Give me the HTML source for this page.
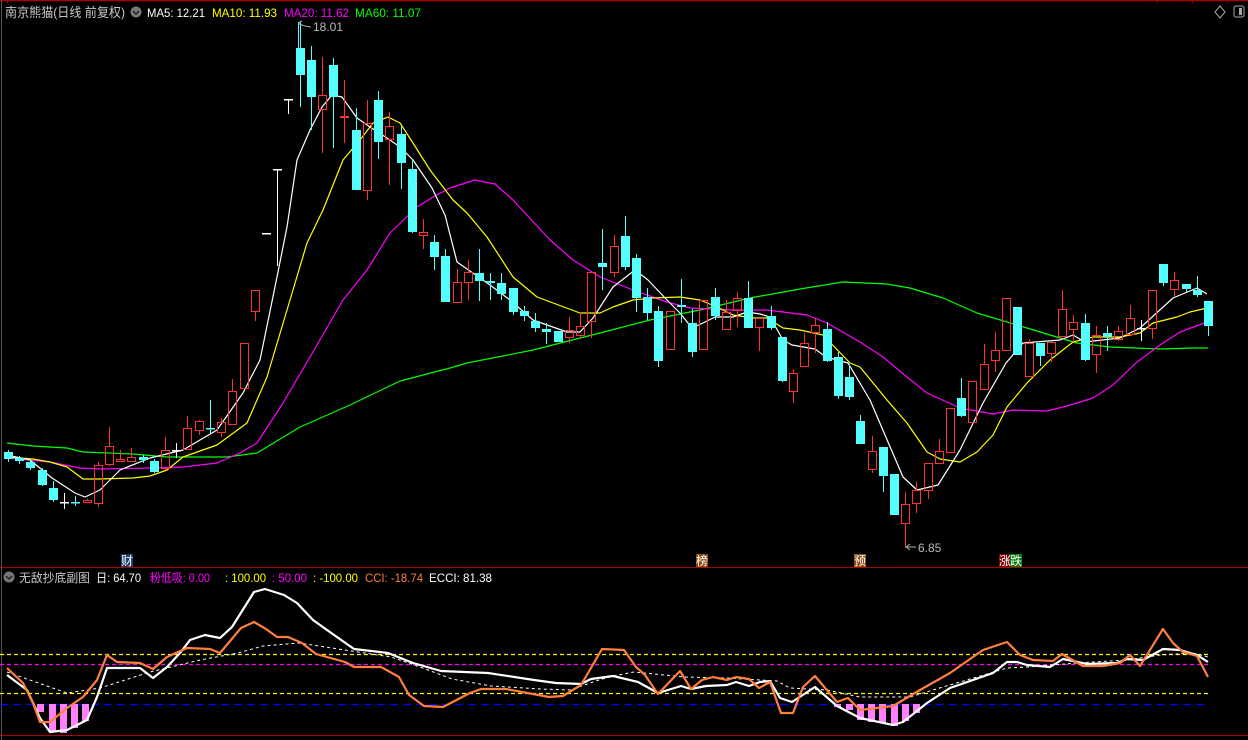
<!DOCTYPE html>
<html><head><meta charset="utf-8">
<style>
html,body{margin:0;padding:0;background:#000;width:1248px;height:740px;overflow:hidden}
svg{display:block}
text{font-family:"Liberation Sans","Noto Sans CJK SC",sans-serif}
</style></head>
<body>
<svg id="s" width="1248" height="740" viewBox="0 0 1248 740" xmlns="http://www.w3.org/2000/svg">
<rect width="1248" height="740" fill="#000"/>
<line x1="0" y1="0.5" x2="1248" y2="0.5" stroke="#a00" stroke-width="1.5"/>
<g stroke="#a00"><line x1="7.5" y1="0" x2="7.5" y2="3"/><line x1="1157.5" y1="0" x2="1157.5" y2="3"/><line x1="1192.5" y1="0" x2="1192.5" y2="3"/><line x1="1227.5" y1="0" x2="1227.5" y2="3"/></g>
<line x1="1.5" y1="0" x2="1.5" y2="740" stroke="#555"/>
<line x1="0" y1="567.5" x2="1248" y2="567.5" stroke="#a00"/>
<line x1="0" y1="735.5" x2="1248" y2="735.5" stroke="#a00"/>
<text x="5" y="17" font-size="13" fill="#c8c8c8" textLength="120" lengthAdjust="spacingAndGlyphs">南京熊猫(日线 前复权)</text>
<circle cx="136" cy="12" r="5.5" fill="#777"/><path d="M133 11 L136 14 L139 11" stroke="#222" stroke-width="1.5" fill="none"/>
<text x="147" y="17" font-size="12" fill="#fff" textLength="58" lengthAdjust="spacingAndGlyphs">MA5: 12.21</text>
<text x="212" y="17" font-size="12" fill="#ff0" textLength="65" lengthAdjust="spacingAndGlyphs">MA10: 11.93</text>
<text x="284" y="17" font-size="12" fill="#f0f" textLength="65" lengthAdjust="spacingAndGlyphs">MA20: 11.62</text>
<text x="355" y="17" font-size="12" fill="#0f0" textLength="66" lengthAdjust="spacingAndGlyphs">MA60: 11.07</text>
<path d="M1220 6 L1225 12 L1220 18 L1215 12 Z" stroke="#aaa" fill="none"/>
<rect x="1234" y="6" width="10" height="11" rx="2" stroke="#aaa" fill="none"/><rect x="1239" y="8" width="3" height="7" fill="#aaa"/>
<g id="ma"></g>
<g id="k"></g>
<line x1="298.5" y1="22" x2="298.5" y2="48" stroke="#54ffff"/>
<path d="M299 24 L305 26 L311 27" stroke="#aaa" fill="none"/><path d="M298 23 L302 21 M298 23 L302 25" stroke="#aaa" fill="none"/>
<text x="313" y="31" font-size="12" fill="#bbb">18.01</text>
<line x1="905.5" y1="529" x2="905.5" y2="548" stroke="#ff3232"/>
<path d="M906 547 L916 547 M906 547 L910 544 M906 547 L910 550" stroke="#aaa" fill="none"/>
<text x="918" y="552" font-size="12" fill="#bbb">6.85</text>
<rect x="121" y="554" width="12" height="13" fill="#163e6c"/><text x="121" y="565" font-size="12" fill="#fff">财</text>
<rect x="696" y="554" width="12" height="13" fill="#8a4a10"/><text x="696" y="565" font-size="12" fill="#fff">榜</text>
<rect x="854" y="554" width="12" height="13" fill="#8a4a10"/><text x="854" y="565" font-size="12" fill="#fff">预</text>
<rect x="999" y="554" width="11" height="13" fill="#7a0000"/><text x="999" y="565" font-size="12" fill="#fff">涨</text>
<rect x="1010" y="554" width="12" height="13" fill="#0a7a0a"/><text x="1010" y="565" font-size="12" fill="#fff">跌</text>
<circle cx="9" cy="577" r="5.5" fill="#777"/><path d="M6 576 L9 579 L12 576" stroke="#222" stroke-width="1.5" fill="none"/>
<text x="19" y="582" font-size="12" fill="#c8c8c8" textLength="71" lengthAdjust="spacingAndGlyphs">无敌抄底副图</text>
<text x="96" y="582" font-size="12" fill="#fff" textLength="45" lengthAdjust="spacingAndGlyphs">日: 64.70</text>
<text x="150" y="582" font-size="12" fill="#f0f" textLength="60" lengthAdjust="spacingAndGlyphs">粉低吸: 0.00</text>
<text x="225" y="582" font-size="12" fill="#ff0" textLength="41" lengthAdjust="spacingAndGlyphs">: 100.00</text>
<text x="272" y="582" font-size="12" fill="#f0f" textLength="35" lengthAdjust="spacingAndGlyphs">: 50.00</text>
<text x="313" y="582" font-size="12" fill="#ff0" textLength="45" lengthAdjust="spacingAndGlyphs">: -100.00</text>
<text x="365" y="582" font-size="12" fill="#ff7f3f" textLength="58" lengthAdjust="spacingAndGlyphs">CCI: -18.74</text>
<text x="429" y="582" font-size="12" fill="#fff" textLength="63" lengthAdjust="spacingAndGlyphs">ECCI: 81.38</text>
<g stroke-dasharray="4 3" stroke-width="1.2">
<line x1="0" y1="654.5" x2="1208" y2="654.5" stroke="#ff0"/>
<line x1="0" y1="664.5" x2="1208" y2="664.5" stroke="#f0f"/>
<line x1="0" y1="693.5" x2="1208" y2="693.5" stroke="#ff0"/>
<line x1="0" y1="704.5" x2="1208" y2="704.5" stroke="#00f" stroke-dasharray="8 5"/>
</g>
<g id="low"></g>
</svg>
<script>
var NS="http://www.w3.org/2000/svg";
function el(p,t,a){var e=document.createElementNS(NS,t);for(var k in a)e.setAttribute(k,a[k]);p.appendChild(e);return e;}
function X(i){return Math.round(8+i*11.215);}
var K=[
[0,'d',452,459,450,462],[1,'d',458,461,456,464],[2,'d',462,468,460,470],[3,'d',470,485,468,486],[4,'d',488,500,481,502],
[5,'w',502,502,493,509],[6,'c',502,502,496,506],[7,'u',500,502,499,503],[8,'u',465,503,462,507],[9,'u',446,464,427,466],
[10,'u',459,461,450,462],[11,'u',457,461,448,462],[12,'d',457,460,455,463],[13,'d',461,472,459,473],[14,'u',450,468,437,470],
[15,'w',450,450,443,458],[16,'u',428,449,416,450],[17,'u',421,430,420,435],[18,'c',428,428,400,433],[19,'u',422,432,418,437],
[20,'u',391,424,379,425],[21,'u',343,388,343,388],[22,'u',290,311,290,321],[23,'w',233,233,233,233],[24,'w',169,169,169,266],
[25,'w',99,99,99,114],[26,'d',48,75,22,107],[27,'d',60,97,46,130],[28,'u',95,109,57,153],[29,'d',65,97,58,148],
[30,'u',116,117,80,143],[31,'d',130,190,108,190],[32,'u',123,190,100,200],[33,'d',100,142,91,159],[34,'u',126,139,112,185],
[35,'d',134,163,126,189],[36,'d',169,232,160,233],[37,'u',232,235,219,249],[38,'d',242,257,235,270],[39,'d',256,302,249,302],
[40,'u',282,302,269,302],[41,'u',272,282,260,300],[42,'d',273,281,249,301],[43,'d',281,283,273,300],[44,'d',283,294,273,300],
[45,'d',288,312,288,315],[46,'d',311,316,306,321],[47,'d',321,328,313,332],[48,'d',329,332,323,344],[49,'d',331,342,331,342],
[50,'u',330,337,317,343],[51,'u',326,335,312,339],[52,'u',272,321,272,338],[53,'d',263,267,229,290],[54,'u',246,272,235,277],
[55,'d',236,267,216,270],[56,'d',258,298,254,312],[57,'d',297,313,288,320],[58,'d',311,361,306,367],[59,'u',311,349,311,349],
[60,'d',305,307,279,323],[61,'d',323,352,309,357],[62,'u',300,349,300,349],[63,'d',297,316,288,320],[64,'u',312,329,300,329],
[65,'u',298,310,292,327],[66,'d',298,328,281,328],[67,'u',318,327,318,351],[68,'d',316,328,306,330],[69,'d',337,381,337,382],
[70,'u',373,391,369,403],[71,'u',343,366,333,366],[72,'u',325,332,318,353],[73,'d',329,361,322,362],[74,'d',357,396,352,399],
[75,'d',377,397,364,400],[76,'d',421,444,415,444],[77,'u',451,469,436,473],[78,'d',447,476,447,492],[79,'d',474,515,474,515],
[80,'u',504,523,492,529],[81,'u',490,503,482,513],[82,'u',463,490,463,499],[83,'u',451,463,439,463],[84,'u',408,452,408,452],
[85,'d',398,416,378,417],[86,'u',381,422,381,422],[87,'u',364,389,344,390],[88,'u',350,360,332,372],[89,'u',298,350,298,350],
[90,'d',307,355,307,355],[91,'u',343,376,339,376],[92,'d',343,356,343,366],[93,'u',342,353,342,362],[94,'u',309,336,290,336],
[95,'u',322,329,315,342],[96,'d',323,360,314,361],[97,'u',335,354,326,373],[98,'d',333,337,326,351],[99,'u',331,339,326,341],
[100,'u',318,334,305,334],[101,'w',328,328,320,341],[102,'u',290,328,290,339],[103,'d',264,283,264,286],[104,'u',280,289,272,297],
[105,'d',284,289,284,292],[106,'d',290,295,276,297],[107,'d',301,326,301,336]];
var g=document.getElementById('k');
K.forEach(function(c){
 var x=X(c[0]),t=c[1],o=c[2],b=c[3],h=c[4],l=c[5];
 var col=t=='u'?'#ff3232':(t=='w'?'#ffffff':'#54ffff');
 var cx=x+0.5;
 if(t=='u'){
  if(h<o) el(g,'line',{x1:cx,y1:h,x2:cx,y2:o,stroke:col});
  if(l>b) el(g,'line',{x1:cx,y1:b,x2:cx,y2:l,stroke:col});
  if(b-o<2){el(g,'rect',{x:x-4,y:o,width:9,height:2,fill:col});}
  else el(g,'rect',{x:x-3.5,y:o+0.5,width:8,height:b-o,stroke:col,fill:'none'});
 } else if(t=='d'){
  el(g,'line',{x1:cx,y1:h,x2:cx,y2:l,stroke:col});
  el(g,'rect',{x:x-4,y:o,width:9,height:Math.max(2,b-o),fill:col});
 } else {
  if(l>h) el(g,'line',{x1:cx,y1:h,x2:cx,y2:l,stroke:col});
  el(g,'rect',{x:x-4,y:o,width:9,height:1.5,fill:col});
 }
});
function pl(p,pts,col,w,dash){var s=pts.map(function(q){return q[0]+','+q[1]}).join(' ');var a={points:s,stroke:col,'stroke-width':w,fill:'none','stroke-linejoin':'round'};if(dash)a['stroke-dasharray']=dash;el(p,'polyline',a);}
var m=document.getElementById('ma');
pl(m,[[7,443],[33,446],[67,448],[83,452],[133,454],[167,457],[227,457],[257,453],[300,427],[350,405],[400,381],[450,368],[467,363],[533,350],[600,333],[650,320],[700,310],[750,298],[800,289],[843,282],[887,284],[910,288],[943,298],[977,313],[1027,328],[1060,338],[1077,343],[1110,347],[1160,349],[1193,348],[1208,348]],'#0f0',1.2);
pl(m,[[7,458],[50,462],[80,468],[100,469],[150,468],[183,467],[217,463],[240,453],[257,443],[283,403],[310,357],[343,300],[367,270],[390,233],[417,207],[433,197],[450,188],[475,180],[495,184],[513,200],[550,240],[573,260],[600,277],[633,290],[667,302],[690,308],[733,310],[767,310],[807,315],[827,323],[860,342],[883,357],[907,377],[927,393],[960,408],[993,414],[1013,410],[1047,411],[1067,406],[1093,398],[1113,385],[1137,362],[1160,345],[1180,332],[1207,322]],'#f0f',1.2);
pl(m,[[7,457],[33,459],[50,462],[67,467],[83,479],[100,479],[133,478],[150,476],[167,470],[183,457],[217,445],[247,423],[267,377],[290,300],[307,243],[323,210],[343,160],[360,140],[373,123],[388,117],[400,123],[413,143],[430,170],[453,200],[467,213],[487,237],[513,277],[537,297],[580,313],[600,313],[613,307],[633,300],[653,298],[680,297],[700,300],[717,307],[733,315],[753,318],[767,318],[783,328],[800,330],[823,335],[850,363],[860,367],[887,400],[907,423],[927,452],[940,459],[960,462],[977,452],[993,435],[1007,407],[1027,383],[1050,360],[1073,342],[1093,337],[1120,337],[1140,333],[1153,323],[1177,317],[1190,312],[1207,308]],'#ff0',1.2);
pl(m,[[7,455],[30,460],[52,478],[75,493],[85,497],[100,490],[120,470],[150,458],[183,450],[217,430],[243,393],[260,360],[277,277],[287,227],[297,160],[310,130],[322,107],[332,95],[342,97],[357,118],[370,127],[387,138],[400,147],[413,160],[432,188],[445,215],[457,262],[490,285],[510,300],[533,320],[567,332],[580,332],[593,318],[613,287],[635,270],[648,280],[667,300],[680,313],[692,328],[703,323],[715,317],[733,317],[747,312],[760,314],[770,317],[783,340],[792,345],[815,349],[826,357],[848,363],[870,400],[903,477],[917,490],[938,485],[960,450],[983,403],[1006,363],[1023,343],[1060,340],[1073,335],[1085,342],[1120,338],[1140,328],[1173,298],[1197,288],[1207,294]],'#fff',1.2);
var lo=document.getElementById('low');
[[37,712],[49,732],[60,733],[71,728],[82,721],[834,707],[846,710],[857,720],[868,722],[879,723],[891,726],[902,721],[913,713]].forEach(function(b){el(lo,'rect',{x:b[0],y:704,width:7,height:b[1]-704,fill:'#ff80ff'});});
pl(lo,[[7,672],[67,693],[100,688],[150,672],[200,660],[238,653],[263,646],[299,643],[345,650],[391,657],[420,667],[452,679],[491,686],[541,689],[570,690],[599,680],[613,676],[634,672],[684,677],[727,678],[777,681],[790,688],[827,690],[860,697],[910,697],[933,690],[977,677],[1007,668],[1027,667],[1077,663],[1127,660],[1160,655],[1193,653],[1208,657]],'#fff',1,'3 3');
pl(lo,[[7,675],[27,690],[40,718],[50,732],[67,730],[87,720],[97,697],[107,668],[140,668],[153,678],[167,667],[180,653],[190,640],[205,635],[220,638],[232,627],[254,592],[265,589],[284,595],[297,603],[313,620],[327,630],[354,649],[388,653],[413,663],[441,671],[488,673],[534,680],[556,683],[581,684],[591,679],[613,676],[638,682],[658,693],[681,686],[691,689],[706,686],[727,685],[736,682],[749,686],[760,682],[770,681],[780,698],[792,702],[815,687],[837,706],[860,718],[893,725],[903,722],[927,703],[950,688],[973,680],[993,673],[1007,662],[1017,662],[1027,665],[1050,667],[1063,659],[1073,661],[1087,664],[1117,663],[1127,659],[1143,660],[1163,649],[1180,650],[1197,655],[1208,662]],'#fff',2.2);
pl(lo,[[7,668],[23,683],[33,703],[40,722],[50,722],[67,708],[83,697],[97,680],[107,655],[117,662],[140,663],[153,669],[167,657],[187,648],[210,649],[220,653],[241,628],[254,622],[266,629],[277,637],[288,637],[302,643],[316,654],[345,662],[354,667],[381,667],[399,677],[409,695],[424,706],[443,707],[470,693],[481,689],[506,689],[549,697],[563,696],[581,685],[602,649],[624,650],[636,667],[645,675],[658,694],[680,671],[691,689],[702,680],[713,677],[727,680],[736,677],[749,679],[759,688],[770,682],[781,713],[793,713],[803,687],[815,676],[837,702],[848,698],[860,710],[893,706],[920,690],[950,673],[983,650],[1007,642],[1020,655],[1033,660],[1053,661],[1062,654],[1083,666],[1103,666],[1120,663],[1130,655],[1140,666],[1163,629],[1173,643],[1183,652],[1197,656],[1208,677]],'#ff7f3f',2.2);
</script>
</body></html>
